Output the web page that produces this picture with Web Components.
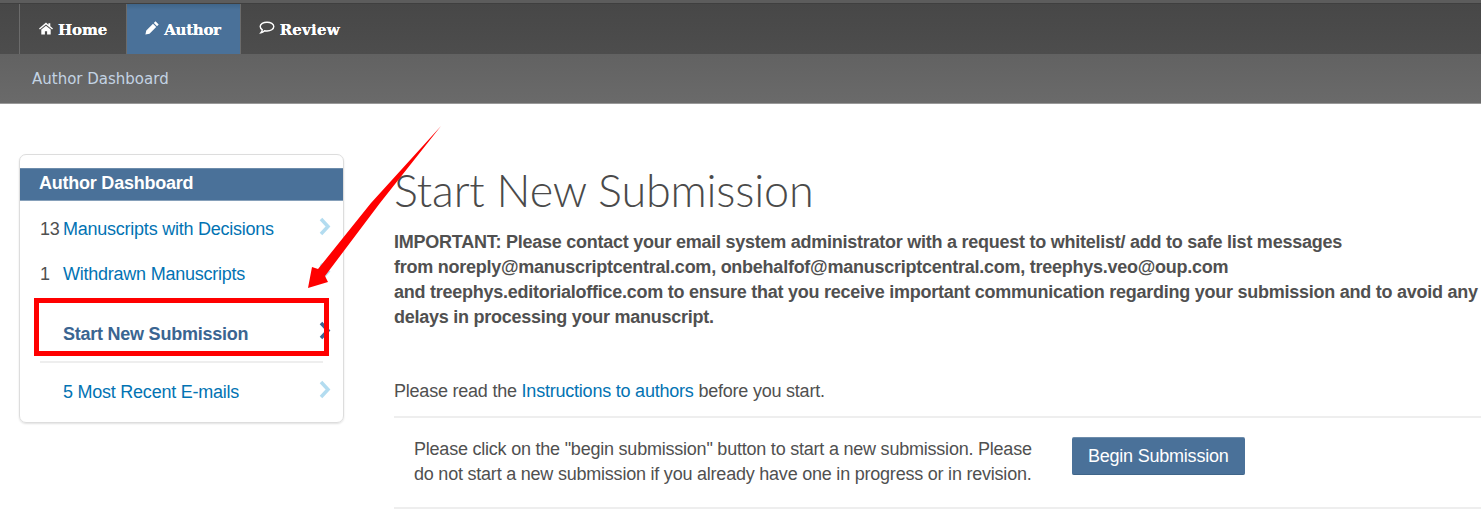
<!DOCTYPE html>
<html><head><meta charset="utf-8"><style>
html,body{margin:0;padding:0;background:#fff;overflow:hidden}
body{width:1481px;height:511px;position:relative;font-family:"Liberation Sans",Arial,sans-serif;color:#505050}
</style></head><body>
<app-nav></app-nav>
<page-main></page-main>
<red-annotation></red-annotation>
<script>
const ico={
home:'<svg width="14" height="13" viewBox="0 0 14 13"><path fill="#fff" d="M7 .6 0 6.600l.9 1L7 2.500l6.100 5.100.9-1L11.300 4.300V1.200H9.400v1.500zM2.300 7.600v5h3.600V9.200h2.200v3.400h3.600v-5L7 3.700z"/></svg>',
pen:'<svg width="14" height="14" viewBox="0 0 14 14"><path fill="#fff" d="M10.500.3 13.700 3.500 12 5.200 8.800 2zM8 2.800 11.200 6 4.500 12.700.4 13.600 1.300 9.500z"/></svg>',
chat:'<svg width="16" height="14" viewBox="0 0 16 14"><path fill="none" stroke="#fff" stroke-width="1.400" d="M8 1.200c3.700 0 6.800 1.900 6.800 4.400S11.700 10 8 10c-.8 0-1.600-.1-2.400-.3-1 1-2.200 1.900-3.700 2.100.8-.9 1.300-1.800 1.400-3C2 7.900 1.200 6.800 1.200 5.600c0-2.500 3.100-4.400 6.800-4.400z"/></svg>'};
function def(name,html){customElements.define(name,class extends HTMLElement{constructor(){super();this.attachShadow({mode:'open'}).innerHTML=html;}});}

def('nav-tab',`<style>
:host{display:flex;align-items:center;height:50px;box-sizing:border-box;padding:1px 19px 0;gap:5px;border-right:1px solid #6b6b6b;font:bold 15px "DejaVu Serif",serif;color:#fff;letter-spacing:-.1px;text-shadow:0 0 .6px #fff}
:host([active]){background:linear-gradient(#3f6589,#4a7199 12%,#4a7199);}
svg{display:block}
span{display:block}
</style><slot name="i"></slot><slot></slot>`);

def('app-nav',`<style>
:host{display:block}
.top{height:4px;background:#5c5c5c;border-bottom:1px solid #3f3f3f;box-sizing:border-box}
.bar{height:50px;background:linear-gradient(#474747,#4d4d4d);display:flex;padding-left:19px}
.bar nav-tab:first-child{border-left:1px solid #6b6b6b}
.sub{height:50px;background:linear-gradient(#626262,#6a6a6a);display:flex;align-items:center;padding:1px 0 0 32px;font:15px "DejaVu Sans",sans-serif;color:#c3d3e3;border-bottom:1px solid #999;box-sizing:border-box}
</style>
<div class="top"></div>
<div class="bar">
<nav-tab><span slot="i">${ico.home}</span>Home</nav-tab>
<nav-tab active style="padding-left:18px;padding-right:19px;letter-spacing:-.3px"><span slot="i">${ico.pen}</span>Author</nav-tab>
<nav-tab style="border:0;padding-left:18px;letter-spacing:.2px"><span slot="i">${ico.chat}</span>Review</nav-tab>
</div>
<div class="sub">Author Dashboard</div>`);

def('side-item',`<style>
:host{display:flex;align-items:center;position:relative;font-size:18px;color:#0273b3;letter-spacing:-.24px}
.n{width:23px;color:#505050;flex:none}
.c{position:absolute;left:279px;top:var(--ct,0)}
svg{display:block}
:host([current]){font-weight:bold;color:#3a6591}
</style><span class="n"><slot name="n"></slot></span><slot></slot><span class="c"><svg width="12" height="19" viewBox="0 0 12 19"><path fill="none" stroke="var(--cc,#b3dcf0)" stroke-width="3.500" d="M2 2l7 7.500L2 17"/></svg></span>`);

def('side-card',`<style>
:host{display:block;width:325px;height:269px;box-sizing:border-box;border:1px solid #ddd;border-radius:7px;box-shadow:0 1px 2px rgba(0,0,0,.12);padding-top:13px;flex:none}
h3{margin:0;height:33px;background:#4a7199;color:#fff;font-size:18px;font-weight:bold;line-height:29px;padding-left:19px;letter-spacing:-.23px;border-top:1px solid #6d8cab;border-bottom:1px solid #86a0ba;box-sizing:border-box}
.list{display:flex;flex-direction:column;padding:6px 20px 0}
side-item{height:45px}
.l3{height:60px;padding-top:15px;box-sizing:border-box;}
hr{border:0;border-top:2px solid #eee;margin:4px 0 0;width:283px}
.l4{height:59px}
</style>
<h3>Author Dashboard</h3>
<div class="list">
<side-item style="--ct:10px"><span slot="n">13</span>Manuscripts with Decisions</side-item>
<side-item style="--ct:10px"><span slot="n">1</span>Withdrawn Manuscripts</side-item>
<side-item class="l3" current style="--ct:24px;--cc:#3a6591;"><span slot="n"></span>Start New Submission</side-item>
<hr>
<side-item class="l4" style="--ct:17px"><span slot="n"></span>5 Most Recent E-mails</side-item>
</div>`);

def('page-main',`<style>
:host{display:flex;padding:50px 0 0 19px;gap:50px;height:407px;box-sizing:border-box;overflow:hidden}
.c{flex:1;min-width:0;white-space:nowrap;font-size:18px;letter-spacing:-.22px}
h1{margin:9px 0 0;font:300 45px/54px Lato,sans-serif;color:#4a4a4a;letter-spacing:-.2px;height:67px}
.imp{font-weight:bold;line-height:25px;margin:0;letter-spacing:-.25px}
.read{margin:49px 0 0;line-height:25px;padding-bottom:12px;border-bottom:2px solid #eee}
a{color:#0273b3}
.row{display:flex;align-items:flex-start;box-sizing:content-box;height:70px;padding:19px 0 0 20px;gap:40px;border-bottom:2px solid #eee}
.row p{margin:0;line-height:25px;white-space:pre-line}
.btn{display:block;background:#4a7199;color:#fff;width:173px;height:38px;line-height:36px;text-align:center;border-radius:2px;border-top:1px solid #6d8cab;border-bottom:1px solid #3f6589;box-sizing:border-box;flex:none}
</style>
<side-card></side-card>
<div class="c">
<h1>Start New Submission</h1>
<p class="imp">IMPORTANT: Please contact your email system administrator with a request to whitelist/ add to safe list messages<br>from noreply@manuscriptcentral.com, onbehalfof@manuscriptcentral.com, treephys.veo@oup.com<br>and treephys.editorialoffice.com to ensure that you receive important communication regarding your submission and to avoid any<br>delays in processing your manuscript.</p>
<p class="read">Please read the <a>Instructions to authors</a> before you start.</p>
<div class="row"><p>Please click on the "begin submission" button to start a new submission. Please
do not start a new submission if you already have one in progress or in revision.</p><span class="btn">Begin Submission</span></div>
</div>`);

def('red-annotation',`<style>
:host{display:block;position:absolute;inset:0;pointer-events:none}
.box{position:absolute;left:34px;top:298px;width:295px;height:58px;border:5px solid #f00;box-sizing:border-box}
svg{position:absolute;left:0;top:0}
</style>
<svg width="1481" height="511"><polygon fill="#f00" points="441,126 380,203 325,276 328,282 308,288 312,267 318,269 371,203"/></svg>
<div class="box"></div>`);
</script>
</body></html>
